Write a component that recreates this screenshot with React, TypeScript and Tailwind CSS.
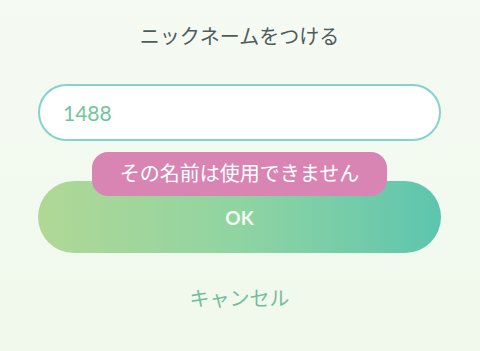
export default function App() {
    const font = { fontFamily: 'Lato, "Noto Sans CJK JP", sans-serif' };
    return (
        <div
            className="flex h-[351px] w-[480px] flex-col items-center bg-linear-to-b from-[#f5faf3] to-[#f0f9ec] pl-[38px] pr-[39px] pt-[22px]"
            style={font}
        >
            <div className="text-[20px] leading-[28px] text-[#4f5c5c]">ニックネームをつける</div>

            <div className="mt-[34px] flex h-[57px] w-full items-center rounded-full border-2 border-[#84d3cc] bg-white pl-[23px]">
                <span className="text-[21px] text-[#74c59e]">1488</span>
            </div>

            <div className="relative z-10 mt-[11px] flex h-[44px] w-[295px] items-center justify-center rounded-[16px] bg-[#d885b3] pb-[2px] text-[20px] text-white">
                その名前は使用できません
            </div>

            <button className="-mt-[15px] flex h-[72px] w-full items-center justify-center rounded-full bg-linear-to-r from-[#b0d895] via-[#8fd4a2] to-[#5cc5ae] pt-[2px] text-[19px] font-bold text-[#f2fbef]">
                OK
            </button>

            <button className="mt-[31px] text-[20px] leading-[28px] text-[#74bd9c]">キャンセル</button>
        </div>
    );
}
